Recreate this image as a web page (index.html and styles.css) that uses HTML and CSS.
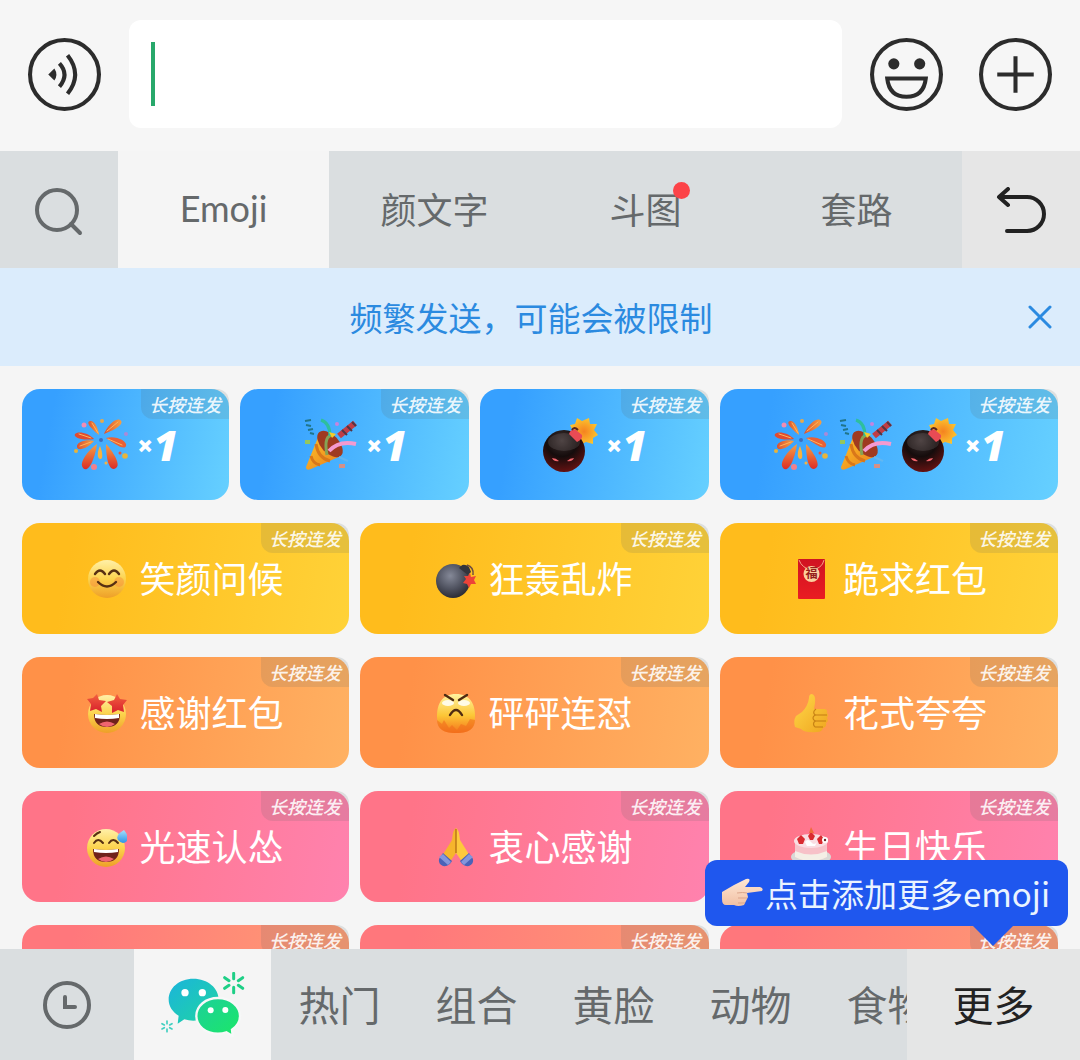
FILE: index.html
```html
<!DOCTYPE html>
<html lang="zh-CN">
<head>
<meta charset="utf-8">
<meta name="viewport" content="width=device-width, initial-scale=1">
<title>Emoji 键盘</title>
<link rel="stylesheet" href="styles.css">
</head>
<body>

<svg class="sprite" aria-hidden="true">
  <defs>
    <linearGradient id="g-ray2" x1="0" x2="1"><stop offset="0" stop-color="#d95132"/><stop offset="1" stop-color="#f9a040"/></linearGradient>
    <linearGradient id="g-fall" x1="0" y1="0" x2="0" y2="1"><stop offset="0" stop-color="#f7a044"/><stop offset="1" stop-color="#dc2c28"/></linearGradient>
    <linearGradient id="g-cone" x1="0" y1="0" x2="1" y2="1"><stop offset="0" stop-color="#ffc629"/><stop offset="1" stop-color="#e87b1c"/></linearGradient>
    <radialGradient id="g-dark" cx=".45" cy=".25" r=".85"><stop offset="0" stop-color="#3c3030"/><stop offset=".45" stop-color="#150c0c"/><stop offset="1" stop-color="#7a1414"/></radialGradient>
    <radialGradient id="g-bomb" cx=".42" cy=".35" r=".65"><stop offset="0" stop-color="#858998"/><stop offset=".6" stop-color="#4f525f"/><stop offset="1" stop-color="#2d2e36"/></radialGradient>
    <radialGradient id="g-spark"><stop offset="0" stop-color="#f58220"/><stop offset="1" stop-color="#fcc22d"/></radialGradient>
    <linearGradient id="g-face" x1="0" y1="0" x2="0" y2="1"><stop offset="0" stop-color="#fff0a8"/><stop offset=".5" stop-color="#fcd34c"/><stop offset="1" stop-color="#ee9f28"/></linearGradient>
    <linearGradient id="g-hot" x1="0" y1="0" x2="0" y2="1"><stop offset="0" stop-color="#fff3a0"/><stop offset=".55" stop-color="#fcc636"/><stop offset="1" stop-color="#f5731c"/></linearGradient>
    <linearGradient id="g-star" x1="0" y1="0" x2="0" y2="1"><stop offset="0" stop-color="#f2603f"/><stop offset="1" stop-color="#d8202c"/></linearGradient>
    <linearGradient id="g-red" x1="0" y1="0" x2="0" y2="1"><stop offset="0" stop-color="#d01322"/><stop offset="1" stop-color="#ea1c22"/></linearGradient>
    <linearGradient id="g-drop" x1="0" y1="0" x2="0" y2="1"><stop offset="0" stop-color="#a8e0fb"/><stop offset="1" stop-color="#2d93e6"/></linearGradient>
    <linearGradient id="g-hand" x1="0" y1="0" x2="1" y2="1"><stop offset="0" stop-color="#ffd849"/><stop offset="1" stop-color="#efa51f"/></linearGradient>
    <linearGradient id="g-skin" x1="0" y1="0" x2="0" y2="1"><stop offset="0" stop-color="#ffe7d4"/><stop offset="1" stop-color="#f0c0a4"/></linearGradient>
    <linearGradient id="g-chat1" x1="0" y1="0" x2="1" y2="1"><stop offset="0" stop-color="#1bb4dc"/><stop offset="1" stop-color="#1fd6a0"/></linearGradient>
    <linearGradient id="g-chat2" x1="0" y1="0" x2="1" y2="1"><stop offset="0" stop-color="#1dcf9b"/><stop offset="1" stop-color="#1be866"/></linearGradient>
  </defs>

  <symbol id="firework" viewBox="0 0 56 56">
    <g fill="url(#g-ray2)">
      <path d="M26 18C25 10 21 3 17 4s-1 6 9 14Z"/>
      <path d="M31 17C33 11 42 0 47 3s-3 9-16 14Z"/>
      <path d="M21 22C15 15 4 14 2 17s6 7 19 5Z" fill="#e04b30"/>
      <path d="M21 24C14 22 3 25 4 30s11 1 17-6Z"/>
    </g>
    <path d="M33 21C42 18 55 24 53 29s-12-3-20-8Z" fill="#ea6035"/>
    <path d="M24 27C17 32 5 45 10 51s12-9 14-24Z" fill="url(#g-fall)"/>
    <path d="M33 27C37 31 49 47 43 51s-10-6-10-24Z" fill="url(#g-fall)"/>
    <path d="M27 29c-3 6-3 12 0 13s3-6 0-13Z" fill="#fbb13c"/>
    <path d="M19 6l6 10M45 5L34 14M6 17l12 4M7 29l11-4M35 22l14 6" stroke="#ffb45a" stroke-width="1" fill="none" stroke-linecap="round"/>
    <circle cx="11" cy="8" r="2.500" fill="#f08cb4"/><circle cx="3" cy="34" r="2" fill="#e8b33c"/><circle cx="21" cy="50" r="3" fill="#f0808c"/><circle cx="52" cy="39" r="2.800" fill="#e8b43c"/><circle cx="53" cy="17" r="2" fill="#aa8ad8"/><circle cx="29" cy="4" r="2" fill="#e6a94c"/><circle cx="28" cy="23" r="2" fill="#3e6ec0"/><circle cx="33" cy="46" r="1.500" fill="#f4b443"/><circle cx="47" cy="36" r="1.500" fill="#e15446"/>
  </symbol>

  <symbol id="popper" viewBox="0 0 56 56">
    <path d="M17 18L4 50q0 4 5 2l30-13Z" fill="url(#g-cone)"/>
    <path d="M14 27q2 14 14 17M9 39q2 8 9 9" stroke="#d9771a" stroke-width="3" fill="none"/>
    <ellipse cx="28" cy="27" rx="9" ry="16" transform="rotate(-43 28 27)" fill="#9f3a20"/>
    <path d="M25 38Q21 17 32 18" stroke="#86a254" stroke-width="3" fill="none"/>
    <path d="M19 3q9 3 9 16" stroke="#2ebf9d" stroke-width="3" fill="none"/>
    <path d="M27 34q10-11 27-7" stroke="#f49ad0" stroke-width="4" fill="none"/>
    <path d="M37 19L53 6" stroke="#c03d45" stroke-width="6"/>
    <path d="M40 13l5 5M45 9l5 5M50 5l4 4" stroke="#553444" stroke-width="2"/>
    <path d="M3 4l6-1M4 8l5 1M6 13l5-1M8 16l4 1" stroke="#20758b" stroke-width="2"/>
    <circle cx="35" cy="7" r="2" fill="#c684df"/><path d="M27 15l7 2-4 4Z" fill="#f5cb2a"/><rect x="3" y="23" width="5" height="4" fill="#95c65e"/><rect x="37" y="47" width="6" height="4" fill="#d59088"/><path d="M37 40l9 4" stroke="#62b7f2" stroke-width="2"/>
  </symbol>

  <symbol id="devil-bomb" viewBox="0 0 56 56">
    <path d="M35 1l5 3 7-3 1 6 7 0-3 6 4 5-5 3 0 6-7-2-6 3-3-5-7-3 3-6-3-6 5-1Z" fill="url(#g-spark)"/>
    <circle cx="22" cy="34" r="21" fill="url(#g-dark)"/>
    <ellipse cx="22" cy="25" rx="16" ry="9" fill="#fff" opacity=".1"/>
    <path d="M27 17q2-6 7-4l6 5q1 4-5 7Z" fill="#e94b55"/><path d="M30 13q2-4 6 0" stroke="#5c251c" stroke-width="2" fill="none"/>
    <path d="M10 41q4 0 7 3-5 1-7-3ZM25 44q3-3 7-3-2 4-7 3Z" fill="#f0646c"/>
  </symbol>

  <symbol id="smile" viewBox="0 0 40 40">
    <circle cx="20" cy="20" r="19" fill="url(#g-face)"/>
    <circle cx="8" cy="23" r="5" fill="#f5803c" opacity=".4"/><circle cx="32" cy="23" r="5" fill="#f5803c" opacity=".4"/>
    <path d="M8 15q5-7 10 0M22 15q5-7 10 0M11 23q9 9 18 0" stroke="#573012" stroke-width="2.400" fill="none" stroke-linecap="round"/>
  </symbol>

  <symbol id="bomb" viewBox="0 0 40 40">
    <circle cx="17" cy="22" r="17" fill="url(#g-bomb)"/>
    <path d="M25 7q3-3 8 1l2 5-3 3-9-7Z" fill="#34343c"/><path d="M31 6q7 2 6 10" stroke="#6c4a42" stroke-width="1.500" fill="none"/>
    <path d="M34 14l1 4 5-1-2 4 2 4-5 0-2 4-2-4-4-1 3-4-2-3 4 0Z" fill="#ed4338"/>
  </symbol>

  <symbol id="envelope" viewBox="0 0 40 40">
    <rect x="7" width="27" height="40" rx="1" fill="url(#g-red)"/>
    <path d="M8 1q3 8 12 10Q31 10 33 1" fill="none" stroke="#f5a288" stroke-width="1"/>
    <circle cx="20.500" cy="15" r="8" fill="#fbd09e"/>
    <text x="20.500" y="19" text-anchor="middle" font-size="12" font-weight="700" fill="#95201c">福</text>
  </symbol>

  <symbol id="starstruck" viewBox="0 0 40 40">
    <circle cx="20" cy="21" r="19" fill="url(#g-face)"/>
    <path d="M7 21q13 2 26 0 0 13-13 13T7 21Z" fill="#70221b"/><path d="M8 21q12 2 24 0v4q-12 2-24 0Z" fill="#fff"/><path d="M12 31q8-5 16 0-8 6-16 0Z" fill="#ef6570"/>
    <path d="M10 1l2 6 7 1-5 5 1 6-6-3-6 2 1-7-4-5 6-1Z" fill="url(#g-star)"/>
    <path d="M30 1l3 5 7 1-4 5 1 7-6-2-6 3 0-7-5-4 7-2Z" fill="url(#g-star)"/>
  </symbol>

  <symbol id="fury" viewBox="0 0 40 40">
    <path d="M20 1C34 1 39 11 39 23s-4 17-19 17S1 35 1 23 6 1 20 1Z" fill="url(#g-hot)"/>
    <path d="M1 27l5 4 2-4 5 8 3-3 5 5 4-6 5 2 4-7 5 1q0 13-19 13T1 27Z" fill="#f06a1c" opacity=".55"/>
    <ellipse cx="12" cy="10" rx="6" ry="3" fill="#fffbe8"/><ellipse cx="28" cy="10" rx="6" ry="3" fill="#fffbe8"/>
    <path d="M9 2l8 5M31 2l-8 5M14 22q6-10 12 0" stroke="#4e2b12" stroke-width="2.400" fill="none" stroke-linecap="round"/>
  </symbol>

  <symbol id="thumb" viewBox="0 0 40 40">
    <path d="M21 1q4 1 3 9l-1 6h11q3 1 2 4 2 2 0 5 2 3-1 5 1 4-3 5-1 4-6 4-12 1-16-3l-6-2Q2 28 5 23l6-4q6-6 7-14 0-4 3-4Z" fill="url(#g-hand)"/>
    <path d="M24 22h12M24 28h11M24 34h8" stroke="#c47d12" stroke-width="1.200"/><path d="M25 16q-4 3-1 6-4 3 0 6-3 3 0 6" fill="none" stroke="#c98416" stroke-width="1.200"/>
  </symbol>

  <symbol id="sweat" viewBox="0 0 40 40">
    <circle cx="19" cy="21" r="19" fill="url(#g-face)"/>
    <path d="M6 22q13 2 26 0 0 13-13 13T6 22Z" fill="#70221b"/><path d="M7 22q12 2 24 0v3q-12 2-24 0Z" fill="#fff"/><path d="M11 32q8-5 16 0-8 6-16 0Z" fill="#ef6570"/>
    <path d="M7 16q4-6 9 0M22 16q4-6 9 0M7 9q3-3 6-4" stroke="#573012" stroke-width="2" fill="none" stroke-linecap="round"/>
    <path d="M37 3q-9 5-6 10 5 6 10 0 1-4-4-10Z" fill="url(#g-drop)"/>
  </symbol>

  <symbol id="pray" viewBox="0 0 40 40">
    <path d="M20 1q-3 1-4 12L6 29l7 7 7-10Z" fill="#f6b52c"/><path d="M20 1q3 1 4 12l10 16-7 7-7-10Z" fill="#fdc93c"/>
    <path d="M20 2v24" stroke="#b87216" stroke-width="1.400"/>
    <path d="M7 26l9 8q-3 6-9 5-5-2-4-7ZM33 26l-9 8q3 6 9 5 5-2 4-7Z" fill="#4a62b8"/><path d="M3 30l4-3 8 8-3 3ZM37 30l-4-3-8 8 3 3Z" fill="#8396dc"/>
  </symbol>

  <symbol id="cake" viewBox="0 0 40 40">
    <ellipse cx="20" cy="30" rx="20" ry="8" fill="#d9d9d6"/>
    <path d="M4 14h32v16q-16 8-32 0Z" fill="#f7c1c8"/><path d="M4 24q16 7 32 0v6q-16 8-32 0Z" fill="#f4efe6"/>
    <ellipse cx="20" cy="14" rx="17" ry="7" fill="#f9dde2"/>
    <path d="M6 12l4-4 4 4-2 5H8ZM17 9l3-4 4 4-2 4h-3ZM26 12l4-4 3 4-2 5h-3Z" fill="#d92b30"/>
    <path d="M14 15q3-4 6 0t6 0l-2 4h-8Z" fill="#fff"/>
    <path d="M18 6l2-6 3 6Z" fill="#ee6b3b"/><circle cx="34" cy="13" r="3" fill="#fff"/><circle cx="34" cy="13" r="1.200" fill="#6c2a2a"/>
  </symbol>

  <symbol id="point" viewBox="0 0 42 30">
    <path d="M1 14L13 7l12-6q5-1 3 3l-4 5h15q4 1 2 4l-15 2 1 4-2 4-2 4q-6 2-10 0L5 27q-4 0-4-6Z" fill="url(#g-skin)"/>
    <path d="M16 15q6-1 10 0M17 20h9M17 25h7" stroke="#dba58a" stroke-width="1" fill="none"/>
  </symbol>
</svg>

<header class="composer">
  <button class="round" aria-label="语音输入">
    <svg viewBox="0 0 72 72" fill="none" stroke="#2c2c2c" stroke-width="4">
      <circle cx="36" cy="36" r="34"/>
      <path d="M20 36l6-6q4 6 0 12Z" fill="#2c2c2c" stroke="none"/>
      <path d="M31 25q10 11 0 23M39 17q15 19 0 38"/>
    </svg>
  </button>
  <label class="field"><input type="text" aria-label="消息"></label>
  <button class="round" aria-label="表情">
    <svg viewBox="0 0 72 72" fill="none" stroke="#2c2c2c" stroke-width="4">
      <circle cx="36" cy="36" r="34"/>
      <circle cx="23.500" cy="25.500" r="5.500" fill="#2c2c2c" stroke="none"/><circle cx="49" cy="25.500" r="5.500" fill="#2c2c2c" stroke="none"/>
      <path d="M17 40h38q-2 18-19 18T17 40Z"/>
    </svg>
  </button>
  <button class="round round-last" aria-label="更多功能">
    <svg viewBox="0 0 72 72" fill="none" stroke="#2c2c2c" stroke-width="4"><circle cx="36" cy="36" r="34"/><path d="M36 18v36M18 36h36"/></svg>
  </button>
</header>

<nav class="tabs">
  <button class="edge search" aria-label="搜索">
    <svg width="48" height="48" viewBox="0 0 48 48" fill="none" stroke="#65696b" stroke-width="4" stroke-linecap="round"><circle cx="22" cy="22" r="20"/><path d="M36 36l9 9"/></svg>
  </button>
  <button class="tab active latin">Emoji</button>
  <button class="tab">颜文字</button>
  <button class="tab"><span class="dotted">斗图</span></button>
  <button class="tab">套路</button>
  <button class="edge undo" aria-label="返回">
    <svg width="50" height="46" viewBox="0 0 50 46" fill="none" stroke="#222" stroke-width="4" stroke-linecap="round" stroke-linejoin="round"><path d="M4 10h27a17 17 0 0 1 0 34H11M12 2L3 10l9 8"/></svg>
  </button>
</nav>

<div class="notice">
  <p>频繁发送，可能会被限制</p>
  <button aria-label="关闭">
    <svg width="24" height="24" viewBox="0 0 24 24" stroke="#2b8ae0" stroke-width="3" stroke-linecap="round"><path d="M2 2l20 20M22 2L2 22"/></svg>
  </button>
</div>

<main class="panel">
  <div class="row combos">
    <button class="card blue"><svg class="big"><use href="#firework"/></svg><span class="count"><i>×</i>1</span><em>长按连发</em></button>
    <button class="card blue"><svg class="big"><use href="#popper"/></svg><span class="count"><i>×</i>1</span><em>长按连发</em></button>
    <button class="card blue"><svg class="big"><use href="#devil-bomb"/></svg><span class="count"><i>×</i>1</span><em>长按连发</em></button>
    <button class="card blue"><svg class="big"><use href="#firework"/></svg><svg class="big"><use href="#popper"/></svg><svg class="big"><use href="#devil-bomb"/></svg><span class="count"><i>×</i>1</span><em>长按连发</em></button>
  </div>
  <div class="row">
    <button class="card yellow"><svg class="small"><use href="#smile"/></svg><span class="name">笑颜问候</span><em>长按连发</em></button>
    <button class="card yellow"><svg class="small"><use href="#bomb"/></svg><span class="name">狂轰乱炸</span><em>长按连发</em></button>
    <button class="card yellow"><svg class="small"><use href="#envelope"/></svg><span class="name">跪求红包</span><em>长按连发</em></button>
  </div>
  <div class="row">
    <button class="card orange"><svg class="small"><use href="#starstruck"/></svg><span class="name">感谢红包</span><em>长按连发</em></button>
    <button class="card orange"><svg class="small"><use href="#fury"/></svg><span class="name">砰砰连怼</span><em>长按连发</em></button>
    <button class="card orange"><svg class="small"><use href="#thumb"/></svg><span class="name">花式夸夸</span><em>长按连发</em></button>
  </div>
  <div class="row">
    <button class="card pink"><svg class="small"><use href="#sweat"/></svg><span class="name">光速认怂</span><em>长按连发</em></button>
    <button class="card pink"><svg class="small"><use href="#pray"/></svg><span class="name">衷心感谢</span><em>长按连发</em></button>
    <button class="card pink"><svg class="small"><use href="#cake"/></svg><span class="name">生日快乐</span><em>长按连发</em></button>
  </div>
  <div class="row">
    <button class="card coral"><em>长按连发</em></button>
    <button class="card coral"><em>长按连发</em></button>
    <button class="card coral"><em>长按连发</em></button>
  </div>
  <div class="tip"><svg width="42" height="30"><use href="#point"/></svg><span>点击添加更多emoji</span></div>
</main>

<footer class="categories">
  <button class="recent" aria-label="最近使用">
    <svg width="48" height="48" viewBox="0 0 48 48" fill="none" stroke="#65696b" stroke-width="4" stroke-linecap="round"><circle cx="24" cy="24" r="22"/><path d="M22 16v10h10"/></svg>
  </button>
  <div class="strip">
    <button class="active" aria-label="微信表情">
      <svg width="85" height="65" viewBox="480 215 255 195">
        <path d="M580 235c43 0 76 28 76 63s-33 63-76 63q-14 0-27-4l-20 13 3-24c-19-12-30-29-30-48 0-35 31-63 74-63Z" fill="url(#g-chat1)"/>
        <circle cx="555" cy="277" r="11" fill="#fff"/><circle cx="607" cy="277" r="11" fill="#fff"/>
        <path d="M654 293c37 0 66 24 66 54 0 17-9 31-24 41l2 19-19-11q-12 4-25 4c-37 0-65-23-65-53s28-54 65-54Z" fill="url(#g-chat2)" stroke="#f7f8f8" stroke-width="7"/>
        <circle cx="632" cy="330" r="9" fill="#fff"/><circle cx="676" cy="329" r="9" fill="#fff"/>
        <path d="M701 219v16M701 261v16M674 232l13 9M715 255l13 9M674 264l13-9M715 241l13-9" stroke="#1ecf86" stroke-width="9" stroke-linecap="round"/>
        <path d="M501 362v8M501 386v8M486 370l7 4M509 382l7 4M486 386l7-4M509 374l7-4" stroke="#3fcfc0" stroke-width="5" stroke-linecap="round"/>
      </svg>
    </button>
    <button>热门</button>
    <button>组合</button>
    <button>黄脸</button>
    <button>动物</button>
    <button>食物</button>
  </div>
  <button class="more">更多</button>
</footer>

</body>
</html>
```

FILE: styles.css
```css
* {
  box-sizing: border-box;
}

body {
  margin: 0;
  height: 100vh;
  display: flex;
  flex-direction: column;
  overflow: hidden;
  background: #f5f5f5;
  color: #65696b;
  font-family: "Noto Sans CJK SC", sans-serif;
  font-size: 36px;
}

button {
  margin: 0;
  padding: 0;
  border: 0;
  background: none;
  color: inherit;
  font: inherit;
  display: flex;
  align-items: center;
  justify-content: center;
}

.sprite {
  position: absolute;
  width: 0;
  height: 0;
}

/* Message bar */

.composer {
  flex: none;
  display: flex;
  align-items: center;
  gap: 28px;
  padding: 20px 28px 23px;
  background: #f6f6f6;
}

.round {
  flex: none;
}

.round svg {
  width: 73px;
  height: 73px;
}

.round-last {
  margin-left: 8px;
}

.field {
  flex: 1;
  height: 108px;
  display: flex;
  align-items: center;
  padding: 0 22px;
  border-radius: 12px;
  background: #fff;
}

.field::before {
  content: "";
  width: 4px;
  height: 64px;
  background: #28a86b;
}

.field input {
  flex: 1;
  min-width: 0;
  border: 0;
  outline: 0;
  background: none;
  font: inherit;
}

/* Top tabs */

.tabs {
  flex: none;
  display: flex;
  height: 117px;
  background: #dadee0;
}

.edge {
  flex: none;
  width: 118px;
}

.search {
  padding-top: 4px;
}

.undo {
  background: #e6e6e6;
}

.tab {
  flex: 1;
  padding-bottom: 4px;
}

.latin {
  font-family: Lato, "Noto Sans CJK SC", sans-serif;
}

.active {
  background: #f5f5f5;
}

.dotted {
  position: relative;
}

.dotted::after {
  content: "";
  position: absolute;
  top: 0;
  right: -8px;
  width: 17px;
  height: 17px;
  border-radius: 50%;
  background: #fc4348;
}

/* Notice */

.notice {
  flex: none;
  display: flex;
  align-items: center;
  height: 98px;
  padding: 0 28px 0 34px;
  background: #dbecfc;
  color: #2b8ae0;
  font-size: 33px;
}

.notice p {
  flex: 1;
  margin: 0;
  text-align: center;
}

/* Cards */

.panel {
  position: relative;
  flex: 1;
  min-height: 0;
  display: flex;
  flex-direction: column;
  gap: 23px;
  padding: 23px 22px 0;
  overflow: hidden;
}

.row {
  flex: none;
  display: grid;
  grid-template-columns: 327fr 349fr 338fr;
  gap: 11px;
}

.combos {
  grid-template-columns: 207fr 229fr 229fr 338fr;
}

.card {
  position: relative;
  height: 111px;
  gap: 12px;
  border-radius: 18px;
  color: #fff;
}

.combos .card {
  gap: 8px;
}

.card em {
  position: absolute;
  top: 0;
  right: 0;
  padding: 0 8px;
  border-radius: 0 12px 0 12px;
  background: rgba(90, 100, 100, 0.15);
  color: rgba(255, 255, 255, 0.9);
  font-size: 18px;
  font-weight: 500;
  line-height: 30px;
}

.name {
  padding-bottom: 4px;
}

.big {
  width: 56px;
  height: 56px;
}

.small {
  width: 40px;
  height: 40px;
  overflow: visible;
}

.count {
  display: flex;
  align-items: center;
  font-family: "Open Sans", sans-serif;
  font-size: 42px;
  font-weight: 800;
  font-style: italic;
  line-height: 56px;
}

.count i {
  font-size: 28px;
}

.blue {
  background: linear-gradient(100deg, #36a0ff 15%, #66d0ff);
}

.yellow {
  background: linear-gradient(100deg, #ffbc1c 15%, #ffd238);
}

.orange {
  background: linear-gradient(100deg, #ff9148 15%, #ffb162);
}

.pink {
  background: linear-gradient(100deg, #ff7488 15%, #ff82ae);
}

.coral {
  background: linear-gradient(100deg, #ff777c 15%, #ff9e72);
}

.tip {
  position: absolute;
  right: 12px;
  bottom: 23px;
  display: flex;
  align-items: center;
  gap: 2px;
  height: 66px;
  padding: 0 18px 0 16px;
  border-radius: 12px;
  background: #1f57ee;
  color: #eaf4ff;
  font-size: 33px;
}

.tip::after {
  content: "";
  position: absolute;
  top: 100%;
  right: 55px;
  border: 20px solid transparent;
  border-top-color: #1f57ee;
  border-bottom: 0;
}

/* Category bar */

.categories {
  flex: none;
  display: flex;
  height: 111px;
  background: #dadee0;
  font-size: 41px;
}

.recent {
  flex: none;
  width: 134px;
}

.strip {
  flex: 1;
  min-width: 0;
  display: flex;
  overflow: hidden;
}

.strip button {
  flex: none;
  width: 137px;
  padding-bottom: 4px;
}

.strip .active {
  padding-bottom: 0;
}

.more {
  flex: none;
  width: 173px;
  padding-bottom: 4px;
  background: #e5e6e6;
  color: #222;
}
```
